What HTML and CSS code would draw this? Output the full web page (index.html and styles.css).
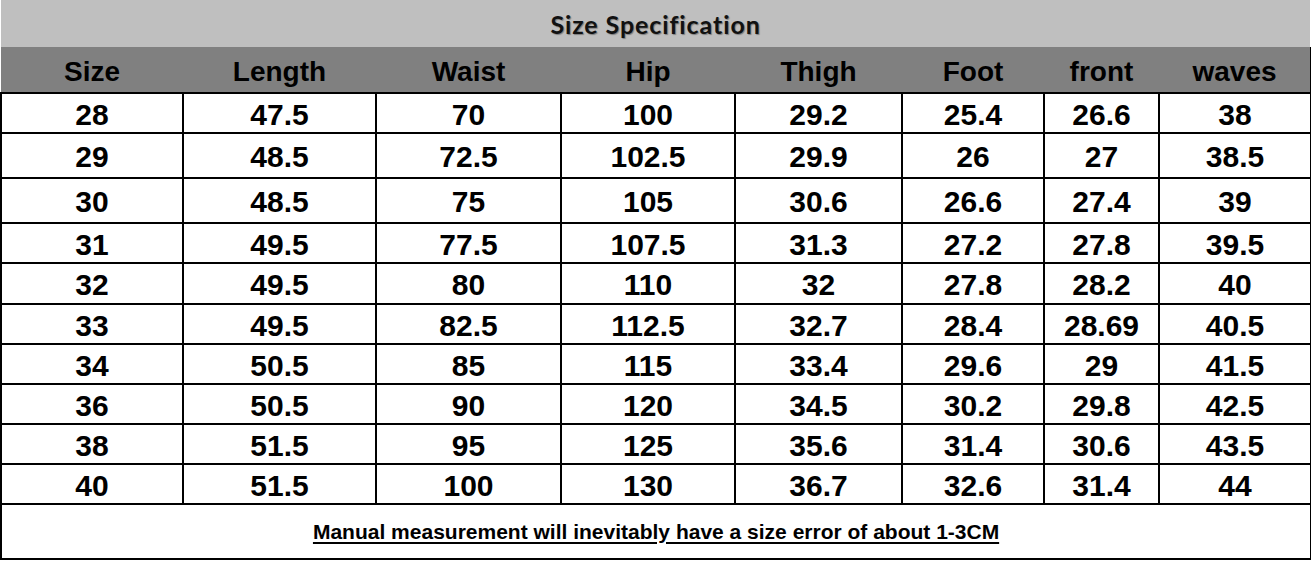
FILE: index.html
```html
<!DOCTYPE html>
<html>
<head>
<meta charset="utf-8">
<link rel="stylesheet" href="styles.css">
</head>
<body>
<table class="spec">
  <colgroup>
    <col class="c1"><col class="c2"><col class="c3"><col class="c4"><col class="c5"><col class="c6"><col class="c7"><col class="c8">
  </colgroup>
  <tr class="title-row"><td colspan="8" class="title">Size Specification</td></tr>
  <tr class="head-row">
    <th>Size</th><th>Length</th><th>Waist</th><th>Hip</th><th>Thigh</th><th>Foot</th><th>front</th><th class="last">waves</th>
  </tr>
  <tr class="r40"><td>28</td><td>47.5</td><td>70</td><td>100</td><td>29.2</td><td>25.4</td><td>26.6</td><td>38</td></tr>
  <tr class="r45"><td>29</td><td>48.5</td><td>72.5</td><td>102.5</td><td>29.9</td><td>26</td><td>27</td><td>38.5</td></tr>
  <tr class="r45"><td>30</td><td>48.5</td><td>75</td><td>105</td><td>30.6</td><td>26.6</td><td>27.4</td><td>39</td></tr>
  <tr class="r40"><td>31</td><td>49.5</td><td>77.5</td><td>107.5</td><td>31.3</td><td>27.2</td><td>27.8</td><td>39.5</td></tr>
  <tr class="r41"><td>32</td><td>49.5</td><td>80</td><td>110</td><td>32</td><td>27.8</td><td>28.2</td><td>40</td></tr>
  <tr class="r40"><td>33</td><td>49.5</td><td>82.5</td><td>112.5</td><td>32.7</td><td>28.4</td><td>28.69</td><td>40.5</td></tr>
  <tr class="r40"><td>34</td><td>50.5</td><td>85</td><td>115</td><td>33.4</td><td>29.6</td><td>29</td><td>41.5</td></tr>
  <tr class="r40"><td>36</td><td>50.5</td><td>90</td><td>120</td><td>34.5</td><td>30.2</td><td>29.8</td><td>42.5</td></tr>
  <tr class="r40"><td>38</td><td>51.5</td><td>95</td><td>125</td><td>35.6</td><td>31.4</td><td>30.6</td><td>43.5</td></tr>
  <tr class="r40"><td>40</td><td>51.5</td><td>100</td><td>130</td><td>36.7</td><td>32.6</td><td>31.4</td><td>44</td></tr>
  <tr class="foot-row"><td colspan="8" class="note"><span>Manual measurement will inevitably have a size error of about 1-3CM</span></td></tr>
</table>
</body>
</html>
```

FILE: styles.css
```css
html, body {
  margin: 0;
  padding: 0;
  background: #ffffff;
}

.spec {
  border-collapse: collapse;
  table-layout: fixed;
  width: 1310px;
  font-family: "Liberation Sans", Arial, sans-serif;
  font-weight: bold;
  color: #000;
}

.c1 { width: 182px; }
.c2 { width: 193px; }
.c3 { width: 185px; }
.c4 { width: 174px; }
.c5 { width: 167px; }
.c6 { width: 142px; }
.c7 { width: 115px; }
.c8 { width: 152px; }

.title-row { height: 47px; }
.title {
  background: #bfbfbf;
  text-align: center;
  font-family: Lato, "Open Sans", sans-serif;
  font-weight: 700;
  font-size: 25px;
  letter-spacing: 0.9px;
  color: #111;
  text-shadow: 1px 1px 1px rgba(0, 0, 0, 0.35);
  padding: 0 0 3px 14px;
  border-right: 2px solid #fff;
}

.head-row { height: 46px; }
.head-row th {
  background: #808080;
  font-size: 28px;
  font-weight: bold;
  padding: 4px 0 0 0;
  text-align: center;
  color: #000;
}
.head-row th.last {
  border-right: 2px solid #000;
}

.r40 { height: 40px; }
.r41 { height: 41px; }
.r45 { height: 45px; }

.spec td {
  padding: 0;
}

.r40 td, .r41 td, .r45 td {
  border: 2px solid #000;
  text-align: center;
  font-size: 30px;
  line-height: 1;
  padding-top: 3px;
}

.foot-row { height: 55px; }
.note {
  border: 2px solid #000;
  text-align: center;
  font-size: 21px;
  padding-top: 2px;
}
.note span {
  text-decoration: underline;
  text-underline-offset: 3px;
  text-decoration-thickness: 2px;
}
```
